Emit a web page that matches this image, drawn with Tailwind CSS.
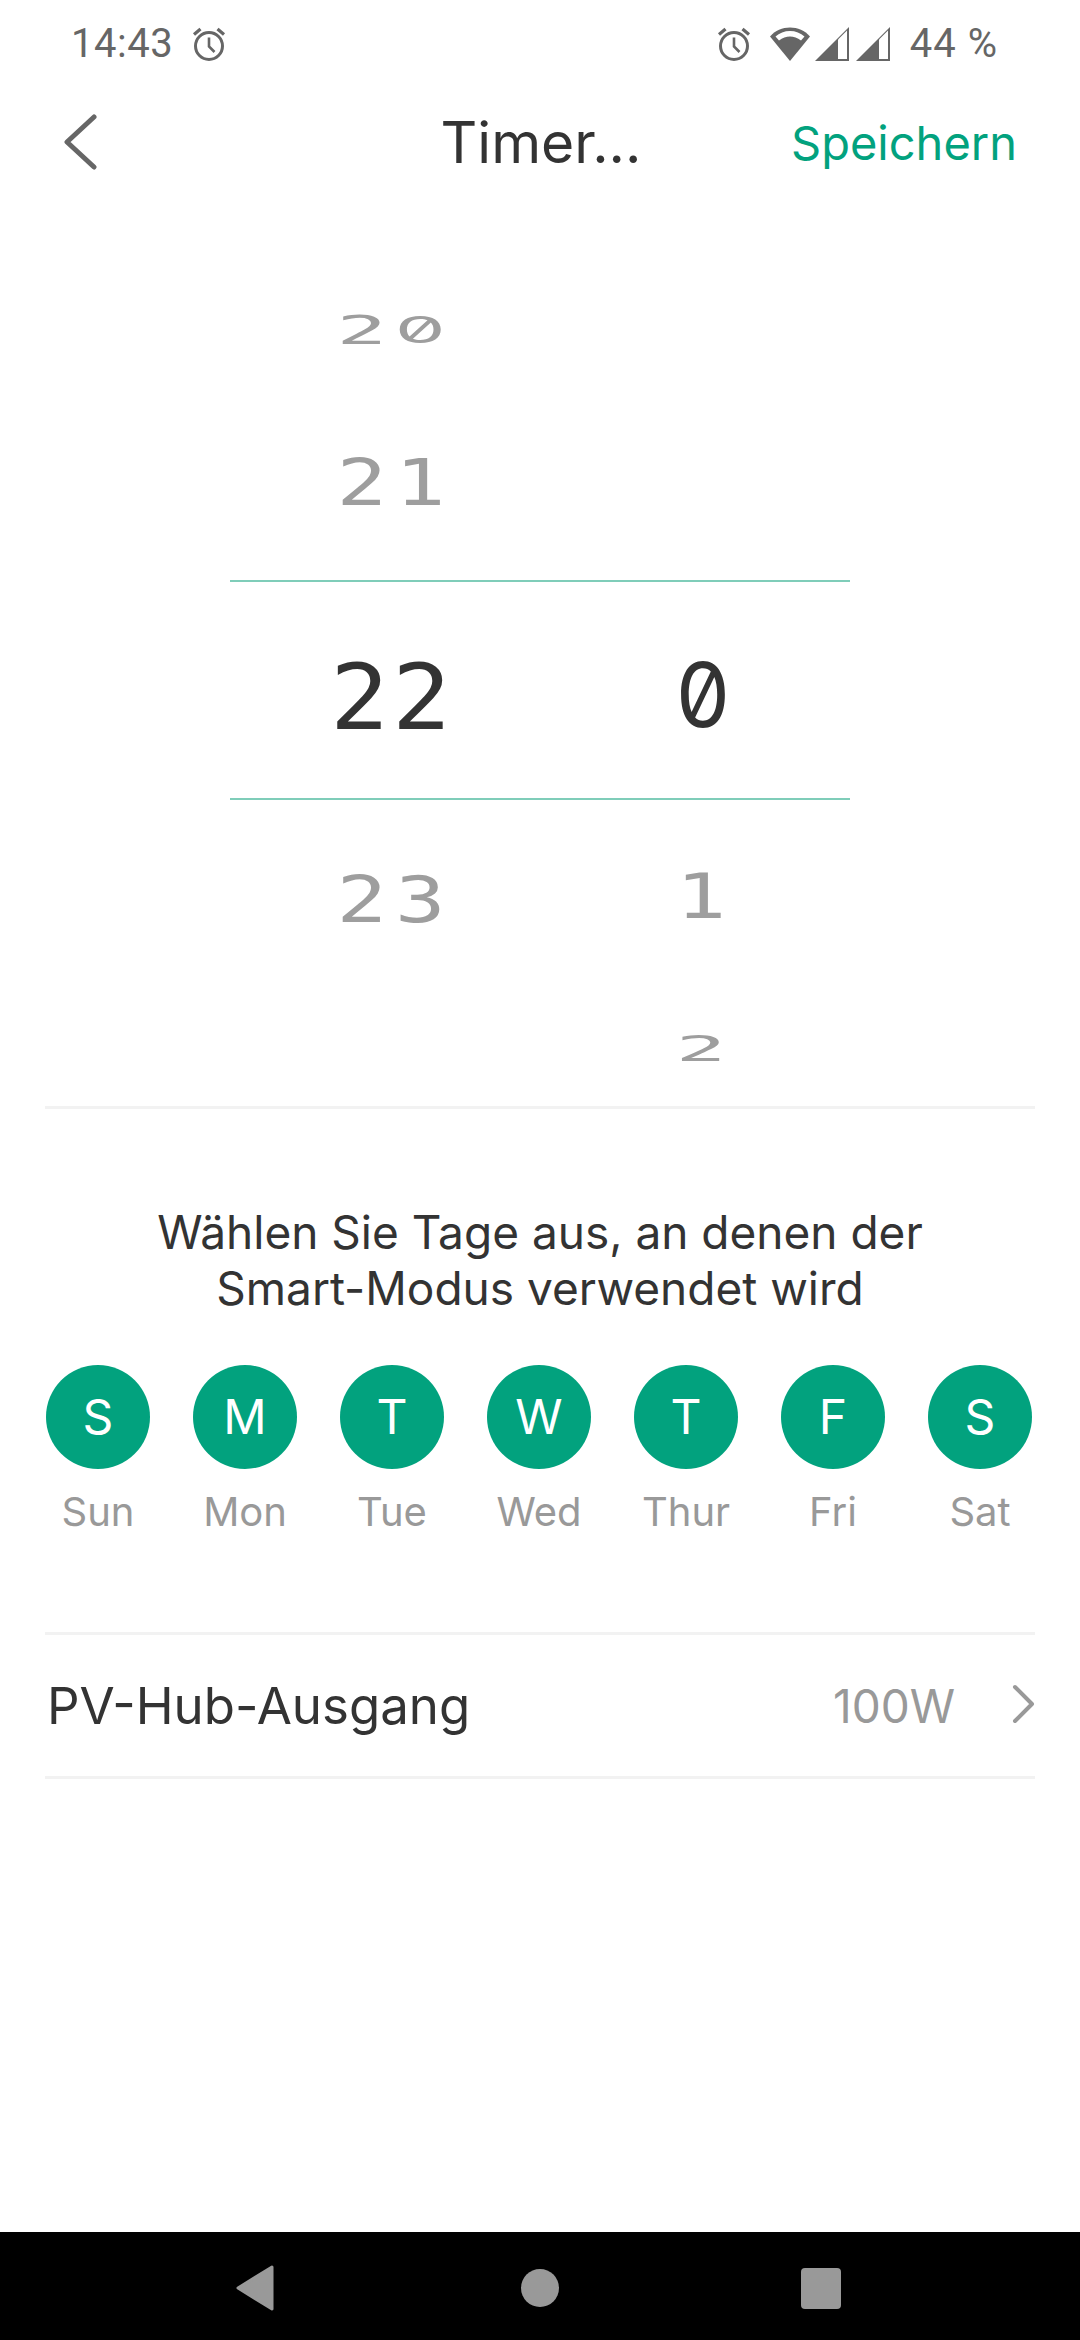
<!DOCTYPE html>
<html lang="de">
<head>
    <meta charset="UTF-8">
    <meta name="viewport" content="width=device-width, initial-scale=1.0">
    <title>Timer</title>
    <script src="https://cdn.jsdelivr.net/npm/@tailwindcss/browser@4"></script>
</head>
<body class="bg-white font-['Inter',sans-serif]">
<div class="w-[1080px] h-[2340px] flex flex-col overflow-hidden">

    <!-- status bar -->
    <div class="h-[88px] flex items-center justify-between pl-[71px] pr-[82px] text-[#666666] font-['Roboto',sans-serif] text-[40px] tracking-[0.5px]">
        <div class="flex items-center gap-[18px]">
            <span>14:43</span>
            <svg class="w-[36px] h-[36px]" viewBox="0 0 36 36" fill="none" stroke="#666666" stroke-width="3">
                <circle cx="18" cy="20" r="13.5"/>
                <path d="M18 11.5V20.5L23.5 26" stroke-width="2.6"/>
                <path d="M3 8.5L9.5 3M33 8.5L26.5 3" stroke-width="3.2"/>
            </svg>
        </div>
        <div class="flex items-center">
            <svg class="w-[36px] h-[36px]" viewBox="0 0 36 36" fill="none" stroke="#666666" stroke-width="3">
                <circle cx="18" cy="20" r="13.5"/>
                <path d="M18 11.5V20.5L23.5 26" stroke-width="2.6"/>
                <path d="M3 8.5L9.5 3M33 8.5L26.5 3" stroke-width="3.2"/>
            </svg>
            <svg class="w-[40px] h-[36px] ml-[18px]" viewBox="0 0 40 36">
                <path d="M0 10.5C10 -1.5 30 -1.5 40 10.5L20 35Z" fill="#666666"/>
                <path d="M5.5 10.5C13 3 27 3 34.500 10.500L31 14.500C24 9 16 9 9 14.500Z" fill="#ffffff"/>
            </svg>
            <svg class="w-[34px] h-[34px] ml-[5px]" viewBox="0 0 34 34">
                <path d="M0 34L34 0V34Z" fill="#666666"/>
                <path d="M23 12.500L32 3.500V32H23Z" fill="#ffffff"/>
            </svg>
            <svg class="w-[34px] h-[34px] ml-[7px]" viewBox="0 0 34 34">
                <path d="M0 34L34 0V34Z" fill="#666666"/>
                <path d="M23 12.500L32 3.500V32H23Z" fill="#ffffff"/>
            </svg>
            <span class="ml-[20px] tracking-[1px]">44 %</span>
        </div>
    </div>

    <!-- header -->
    <div class="h-[108px] grid grid-cols-[1fr_auto_1fr] items-center pl-[62px] pr-[63px]">
        <svg class="w-[36px] h-[56px]" viewBox="0 0 36 56" fill="none" stroke="#666666" stroke-width="5" stroke-linecap="round" stroke-linejoin="round">
            <path d="M32 3L5 28L32 53" />
        </svg>
        <div class="text-[57px] text-[#333333] leading-none ml-[3px]">Timer...</div>
        <div class="text-[47px] text-[#02a27e] text-right leading-none">Speichern</div>
    </div>

    <!-- time picker -->
    <div class="w-[620px] mx-auto font-['DejaVu_Sans_Mono',monospace] text-[#9e9e9e]">
        <div class="h-[384px] pb-[21px] flex flex-col justify-end">
            <div class="h-[152px] grid grid-cols-[322px_298px] items-center text-center text-[84px] leading-none">
                <span class="scale-y-[0.455] flex justify-center gap-[8px]"><span>2</span><span class="font-['Inter',sans-serif] slashed-zero text-[80px]">0</span></span>
            </div>
            <div class="h-[152px] grid grid-cols-[330px_290px] items-center text-center text-[84px] tracking-[8px] leading-none">
                <span class="scale-y-[0.76]">21</span>
            </div>
        </div>
        <div class="h-[220px] border-y-2 border-[#7fcdb9] grid grid-cols-[330px_290px] items-center text-center text-[98px] tracking-[3px] leading-none text-[#333333] pt-[10px]">
            <span class="scale-y-[0.92] -translate-x-[3px] translate-y-[3px]">22</span>
            <span class="font-['Inter',sans-serif] slashed-zero text-[90px] scale-x-[0.95] tracking-normal -ml-[4px]">0</span>
        </div>
        <div class="h-[306px] pt-[24px] grid grid-cols-[330px_290px] text-center text-[84px] tracking-[8px] leading-none">
            <div>
                <div class="h-[152px] flex items-center justify-center"><span class="scale-y-[0.76]">23</span></div>
            </div>
            <div class="-mt-[3px]">
                <div class="h-[152px] flex items-center justify-center"><span class="scale-y-[0.74]">1</span></div>
                <div class="h-[152px] flex items-center justify-center"><span class="scale-y-[0.43]">2</span></div>
            </div>
        </div>
    </div>

    <div class="h-[3px] mx-[45px] bg-[#f2f2f2]"></div>

    <!-- repeat days -->
    <div class="mt-[95px] text-center text-[46px] leading-[56px] text-[#333333]">
        Wählen Sie Tage aus, an denen der<br>Smart-Modus verwendet wird
    </div>
    <div class="mt-[49px] pl-[46px] flex gap-[43px]">
        <div class="w-[104px] flex flex-col items-center">
            <div class="w-[104px] h-[104px] rounded-full bg-[#02a27e] flex items-center justify-center text-white text-[48px]">S</div>
            <div class="mt-[18px] text-[40px] leading-[50px] text-[#999999]">Sun</div>
        </div>
        <div class="w-[104px] flex flex-col items-center">
            <div class="w-[104px] h-[104px] rounded-full bg-[#02a27e] flex items-center justify-center text-white text-[48px]">M</div>
            <div class="mt-[18px] text-[40px] leading-[50px] text-[#999999]">Mon</div>
        </div>
        <div class="w-[104px] flex flex-col items-center">
            <div class="w-[104px] h-[104px] rounded-full bg-[#02a27e] flex items-center justify-center text-white text-[48px]">T</div>
            <div class="mt-[18px] text-[40px] leading-[50px] text-[#999999]">Tue</div>
        </div>
        <div class="w-[104px] flex flex-col items-center">
            <div class="w-[104px] h-[104px] rounded-full bg-[#02a27e] flex items-center justify-center text-white text-[48px]">W</div>
            <div class="mt-[18px] text-[40px] leading-[50px] text-[#999999]">Wed</div>
        </div>
        <div class="w-[104px] flex flex-col items-center">
            <div class="w-[104px] h-[104px] rounded-full bg-[#02a27e] flex items-center justify-center text-white text-[48px]">T</div>
            <div class="mt-[18px] text-[40px] leading-[50px] text-[#999999]">Thur</div>
        </div>
        <div class="w-[104px] flex flex-col items-center">
            <div class="w-[104px] h-[104px] rounded-full bg-[#02a27e] flex items-center justify-center text-white text-[48px]">F</div>
            <div class="mt-[18px] text-[40px] leading-[50px] text-[#999999]">Fri</div>
        </div>
        <div class="w-[104px] flex flex-col items-center">
            <div class="w-[104px] h-[104px] rounded-full bg-[#02a27e] flex items-center justify-center text-white text-[48px]">S</div>
            <div class="mt-[18px] text-[40px] leading-[50px] text-[#999999]">Sat</div>
        </div>
    </div>

    <!-- output row -->
    <div class="mt-[95px] mx-[45px] h-[147px] border-y-[3px] border-[#f2f2f2] flex items-center justify-between">
        <span class="text-[51px] text-[#333333] pl-[2px] pt-[2px]">PV-Hub-Ausgang</span>
        <div class="flex items-center -mt-[3px]">
            <span class="text-[46px] text-[#999999] pt-[4px]">100W</span>
            <svg class="w-[24px] h-[40px] ml-[56px]" viewBox="0 0 24 40" fill="none" stroke="#999999" stroke-width="4" stroke-linecap="round" stroke-linejoin="round">
                <path d="M4 3L21 20L4 37" />
            </svg>
        </div>
    </div>

    <div class="flex-1"></div>

    <!-- nav bar -->
    <div class="h-[108px] bg-black flex items-center pl-[236px] pt-[4px]">
        <svg class="w-[38px] h-[46px]" viewBox="0 0 38 46">
            <path d="M36 2L2 23L36 44Z" fill="#999999" stroke="#999999" stroke-width="3" stroke-linejoin="round"/>
        </svg>
        <div class="ml-[247px] w-[38px] h-[38px] rounded-full bg-[#999999]"></div>
        <div class="ml-[242px] w-[40px] h-[41px] rounded-[4px] bg-[#999999]"></div>
    </div>
</div>
</body>
</html>
